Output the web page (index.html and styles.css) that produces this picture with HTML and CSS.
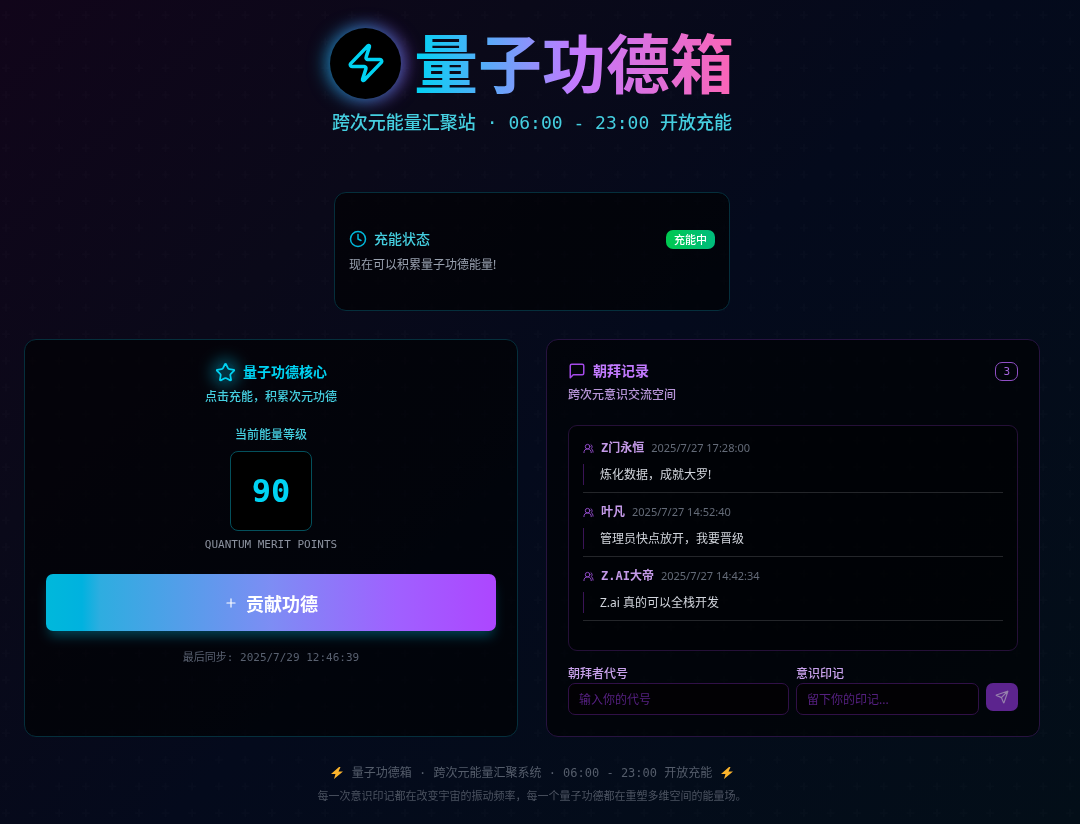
FILE: index.html
```
<!DOCTYPE html>
<html lang="zh-CN">
<head>
<meta charset="utf-8">
<meta name="viewport" content="width=device-width, initial-scale=1">
<title>量子功德箱</title>
<link rel="stylesheet" href="styles.css">
</head>
<body>
<svg class="stars" aria-hidden="true">
  <defs>
    <pattern id="plus" x="1" y="10" width="26.6" height="26.6" patternUnits="userSpaceOnUse">
      <path d="M5 1v8M1 5h8" stroke="#9c92ac" stroke-opacity=".025" stroke-width="1.8"/>
    </pattern>
  </defs>
  <rect width="100%" height="100%" fill="url(#plus)"/>
</svg>
<div class="page">
  <header class="hero">
    <div class="brand">
      <div class="orb">
        <svg class="icon orb-icon" viewBox="0 0 24 24" aria-hidden="true"><path d="M4 14a1 1 0 0 1-.78-1.63l9.9-10.2a.5.5 0 0 1 .86.46l-1.92 6.02A1 1 0 0 0 13 10h7a1 1 0 0 1 .78 1.63l-9.9 10.2a.5.5 0 0 1-.86-.46l1.92-6.02A1 1 0 0 0 11 14z"/></svg>
      </div>
      <h1 class="title">量子功德箱</h1>
    </div>
    <p class="subtitle">跨次元能量汇聚站 · 06:00 - 23:00 开放充能</p>
  </header>

  <section class="status card">
    <div class="status-row">
      <svg class="icon clock-icon" viewBox="0 0 24 24" aria-hidden="true"><circle cx="12" cy="12" r="10"/><path d="M12 6v6l4 2"/></svg>
      <h2 class="status-title">充能状态</h2>
      <span class="status-badge">充能中</span>
    </div>
    <p class="status-text">现在可以积累量子功德能量!</p>
  </section>

  <main class="columns">
    <section class="core card">
      <h2 class="core-title">
        <svg class="icon star-icon" viewBox="0 0 24 24" aria-hidden="true"><path d="M11.525 2.295a.53.53 0 0 1 .95 0l2.31 4.679a2.123 2.123 0 0 0 1.595 1.16l5.166.756a.53.53 0 0 1 .294.904l-3.736 3.638a2.123 2.123 0 0 0-.611 1.878l.882 5.14a.53.53 0 0 1-.771.56l-4.618-2.428a2.122 2.122 0 0 0-1.973 0L6.396 21.01a.53.53 0 0 1-.77-.56l.881-5.139a2.122 2.122 0 0 0-.611-1.879L2.16 9.795a.53.53 0 0 1 .294-.906l5.165-.755a2.122 2.122 0 0 0 1.597-1.16z"/></svg>
        量子功德核心
      </h2>
      <p class="core-desc">点击充能，积累次元功德</p>
      <p class="level-label">当前能量等级</p>
      <output class="level">90</output>
      <p class="units">QUANTUM MERIT POINTS</p>
      <button class="donate" type="button">
        <svg class="icon plus-icon" viewBox="0 0 24 24" aria-hidden="true"><path d="M5 12h14M12 5v14"/></svg>
        贡献功德
      </button>
      <p class="sync">最后同步: 2025/7/29 12:46:39</p>
    </section>

    <section class="records card">
      <div class="records-head">
        <svg class="icon chat-icon" viewBox="0 0 24 24" aria-hidden="true"><path d="M21 15a2 2 0 0 1-2 2H7l-4 4V5a2 2 0 0 1 2-2h14a2 2 0 0 1 2 2z"/></svg>
        <h2 class="records-title">朝拜记录</h2>
        <span class="count">3</span>
      </div>
      <p class="records-desc">跨次元意识交流空间</p>
      <ul class="feed">
        <li class="entry">
          <div class="entry-head">
            <svg class="icon users-icon" viewBox="0 0 24 24" aria-hidden="true"><path d="M18 21a8 8 0 0 0-16 0"/><circle cx="10" cy="8" r="5"/><path d="M22 20c0-3.37-2-6.5-4-8a5 5 0 0 0-.45-8.3"/></svg>
            <strong class="name">Z门永恒</strong><time class="time">2025/7/27 17:28:00</time>
          </div>
          <p class="message">炼化数据，成就大罗!</p>
        </li>
        <li class="entry">
          <div class="entry-head">
            <svg class="icon users-icon" viewBox="0 0 24 24" aria-hidden="true"><path d="M18 21a8 8 0 0 0-16 0"/><circle cx="10" cy="8" r="5"/><path d="M22 20c0-3.37-2-6.5-4-8a5 5 0 0 0-.45-8.3"/></svg>
            <strong class="name">叶凡</strong><time class="time">2025/7/27 14:52:40</time>
          </div>
          <p class="message">管理员快点放开，我要晋级</p>
        </li>
        <li class="entry">
          <div class="entry-head">
            <svg class="icon users-icon" viewBox="0 0 24 24" aria-hidden="true"><path d="M18 21a8 8 0 0 0-16 0"/><circle cx="10" cy="8" r="5"/><path d="M22 20c0-3.37-2-6.5-4-8a5 5 0 0 0-.45-8.3"/></svg>
            <strong class="name">Z.AI大帝</strong><time class="time">2025/7/27 14:42:34</time>
          </div>
          <p class="message">Z.ai 真的可以全栈开发</p>
        </li>
      </ul>
      <form class="compose">
        <div class="field field-name">
          <label class="label" for="name">朝拜者代号</label>
          <input class="input" id="name" type="text" placeholder="输入你的代号">
        </div>
        <div class="field field-message">
          <label class="label" for="message">意识印记</label>
          <input class="input" id="message" type="text" placeholder="留下你的印记...">
        </div>
        <button class="send" type="button" aria-label="发送">
          <svg class="icon send-icon" viewBox="0 0 24 24" aria-hidden="true"><path d="M14.536 21.686a.5.5 0 0 0 .937-.024l6.5-19a.496.496 0 0 0-.635-.635l-19 6.5a.5.5 0 0 0-.024.937l7.93 3.18a2 2 0 0 1 1.112 1.11zM21.854 2.147l-10.94 10.939"/></svg>
        </button>
      </form>
    </section>
  </main>

  <footer class="footer">
    <p class="footer-main">
      <svg class="bolt" viewBox="0 0 12 12" aria-hidden="true"><path d="M8 0 0 7h4.500L3 12l9-7.500H7.500L9.500 0z"/></svg>
      <span>量子功德箱 · 跨次元能量汇聚系统 · 06:00 - 23:00 开放充能</span>
      <svg class="bolt" viewBox="0 0 12 12" aria-hidden="true"><path d="M8 0 0 7h4.500L3 12l9-7.500H7.500L9.500 0z"/></svg>
    </p>
    <p class="footer-note">每一次意识印记都在改变宇宙的振动频率，每一个量子功德都在重塑多维空间的能量场。</p>
  </footer>
</div>
</body>
</html>
```
FILE: styles.css
```
* { box-sizing: border-box; }

:root {
  --sans: "Noto Sans", "Noto Sans CJK SC", sans-serif;
  --mono: "DejaVu Sans Mono", "Noto Sans CJK SC", monospace;
  --cyan: #00d3f3;
  --cyan-soft: #45cfe0;
  --purple: #c27aff;
}

html { min-height: 100%; background: linear-gradient(135deg, #11051a 0%, #0a0919 28%, #040a1c 52%, #030e18 100%); }

body {
  margin: 0;
  font-family: var(--sans);
  font-size: 12px;
  line-height: 18px;
  color: #d1d5dc;
}

h1, h2, p, ul { margin: 0; padding: 0; }
ul { list-style: none; }

.icon {
  flex: none;
  fill: none;
  stroke: currentColor;
  stroke-width: 2;
  stroke-linecap: round;
  stroke-linejoin: round;
}

.stars {
  position: fixed;
  inset: 0;
  z-index: -1;
  width: 100%;
  height: 100%;
}

.page { padding: 26px 40px 16px 24px; }

.card {
  border: 1px solid #052f3c;
  border-radius: 12px;
  background: rgba(0, 0, 0, .6);
}

/* Header */
.hero { text-align: center; }

.brand {
  display: flex;
  align-items: center;
  justify-content: center;
  gap: 13px;
}

.orb {
  display: flex;
  align-items: center;
  justify-content: center;
  width: 71px;
  height: 71px;
  border-radius: 50%;
  background: #000;
  color: var(--cyan);
  box-shadow: -4px 0 18px rgba(0, 184, 219, .6), 4px 0 18px rgba(173, 90, 255, .6);
}

.orb-icon { width: 42px; height: 42px; }

.title {
  padding-top: 6px;
  font-family: var(--mono);
  font-size: 64px;
  line-height: 68px;
  font-weight: 700;
  color: transparent;
  background: linear-gradient(90deg, #00d3f3, #c27aff 50%, #fb64b6);
  background-clip: text;
  -webkit-background-clip: text;
}

.subtitle {
  margin-top: 10px;
  font-family: var(--mono);
  font-size: 18px;
  line-height: 26px;
  font-weight: 500;
  color: var(--cyan-soft);
}

/* Status */
.status {
  max-width: 396px;
  margin: 56px auto 28px;
  padding: 36px 14px;
}

.status-row { display: flex; align-items: center; gap: 7px; }
.clock-icon { width: 18px; height: 18px; color: #00b8db; }
.status-title { font-size: 14px; line-height: 20px; font-weight: 500; color: var(--cyan-soft); }

.status-badge {
  margin-left: auto;
  padding: 0 8px;
  border-radius: 7px;
  background: linear-gradient(90deg, #00c950, #00bc7d);
  font-size: 11px;
  line-height: 19px;
  font-weight: 500;
  color: #fff;
}

.status-text { margin-top: 7px; line-height: 18px; color: #99a1af; }

/* Columns */
.columns { display: grid; grid-template-columns: 1fr 1fr; gap: 28px; }

.core {
  display: flex;
  flex-direction: column;
  align-items: center;
  padding: 21px;
}

.core-title {
  display: flex;
  align-items: center;
  gap: 7px;
  font-size: 14px;
  line-height: 22px;
  font-weight: 700;
  color: var(--cyan);
}

.star-icon {
  width: 21px;
  height: 21px;
  border-radius: 50%;
  background: rgba(0, 184, 219, .25);
  box-shadow: 0 0 14px 4px rgba(0, 184, 219, .35);
}

.core-desc { margin-top: 5px; font-weight: 500; color: var(--cyan-soft); }
.level-label { margin-top: 20px; font-weight: 500; color: var(--cyan-soft); }

.level {
  display: grid;
  place-items: center;
  min-width: 82px;
  margin-top: 7px;
  border: 1px solid #04505c;
  border-radius: 8px;
  background: #000;
  font-family: var(--mono);
  font-size: 32px;
  line-height: 78px;
  font-weight: 700;
  color: var(--cyan);
}

.units {
  margin-top: 5px;
  font-family: var(--mono);
  font-size: 11px;
  color: #8b919e;
}

.donate {
  display: flex;
  align-items: center;
  justify-content: center;
  gap: 8px;
  width: 100%;
  height: 57px;
  margin-top: 20px;
  padding: 0;
  border: 0;
  border-radius: 7px;
  background: linear-gradient(90deg, #00b8db 0%, #00b2df 8%, #2eade0 12%, #7d8df4 50%, #a060ff 78%, #ad46ff 100%);
  box-shadow: 0 8px 12px -3px rgba(0, 184, 219, .35);
  font-family: var(--mono);
  font-size: 18px;
  font-weight: 700;
  color: #fff;
}

.plus-icon { width: 14px; height: 14px; }

.sync {
  margin-top: 18px;
  font-family: var(--mono);
  font-size: 11px;
  color: #596170;
}

/* Records */
.records {
  display: flex;
  flex-direction: column;
  padding: 21px;
  border-color: #271340;
}

.records-head { display: flex; align-items: center; gap: 7px; }
.chat-icon { width: 18px; height: 18px; color: #a34ae8; }
.records-title { font-size: 14px; line-height: 20px; font-weight: 700; color: var(--purple); }

.count {
  margin-left: auto;
  padding: 0 7px;
  border: 1px solid #8f4fc4;
  border-radius: 7px;
  font-family: var(--mono);
  font-size: 11px;
  line-height: 17px;
  color: #a463dc;
}

.records-desc { margin-top: 5px; font-weight: 500; color: #b795d8; }

.feed {
  flex: 1;
  min-height: 226px;
  margin-top: 21px;
  padding: 14px;
  border: 1px solid #251038;
  border-radius: 9px;
  background: rgba(0, 0, 0, .4);
}

.entry { padding-bottom: 7px; border-bottom: 1px solid #24262a; }
.entry + .entry { margin-top: 11px; }
.entry-head { display: flex; align-items: center; gap: 7px; line-height: 16px; }
.users-icon { width: 11px; height: 11px; color: #9a50d4; }
.name { font-family: var(--mono); font-weight: 700; color: #c49ae8; }
.time { font-size: 11px; color: #646b78; }

.message {
  margin-top: 8px;
  padding-left: 16px;
  border-left: 1px solid #3a1457;
  line-height: 21px;
}

.compose { display: flex; align-items: flex-end; gap: 7px; margin-top: 14px; }
.field { display: flex; flex-direction: column; min-width: 0; }
.field-name { flex: 221; }
.field-message { flex: 183; }
.label { font-weight: 500; color: #c9a2ec; }

.input {
  width: 100%;
  height: 32px;
  padding: 0 10px;
  border: 1px solid #301047;
  border-radius: 7px;
  background: #020104;
  font-family: var(--sans);
  font-size: 12px;
  color: #e9d4ff;
}

.input::placeholder { color: #552080; opacity: 1; }

.send {
  display: grid;
  place-items: center;
  width: 32px;
  height: 28px;
  margin-bottom: 4px;
  padding: 0;
  border: 0;
  border-radius: 7px;
  background: #5c248e;
  color: #9680ac;
}

.send-icon { width: 14px; height: 14px; }

/* Footer */
.footer { margin-top: 26px; text-align: center; color: #555d6b; }

.footer-main {
  display: flex;
  align-items: center;
  justify-content: center;
  gap: 9px;
  font-family: var(--mono);
  font-size: 12px;
  line-height: 20px;
}

.bolt { width: 12px; height: 12px; fill: #fcb42c; }
.footer-note { margin-top: 4px; font-size: 11px; line-height: 18px; color: #4c5361; }
```
